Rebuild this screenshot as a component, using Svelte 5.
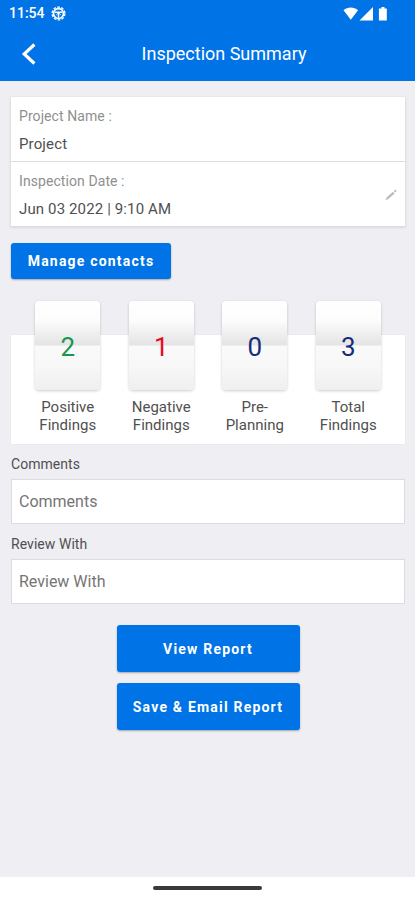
<script lang="ts">
    const details = [
        { label: "Project Name :", value: "Project", editable: false },
        { label: "Inspection Date :", value: "Jun 03 2022 | 9:10 AM", editable: true },
    ];

    const findings = [
        { count: 2, lines: ["Positive", "Findings"], tone: "positive" },
        { count: 1, lines: ["Negative", "Findings"], tone: "negative" },
        { count: 0, lines: ["Pre-", "Planning"], tone: "neutral" },
        { count: 3, lines: ["Total", "Findings"], tone: "neutral" },
    ];

    let comments = $state("");
    let reviewWith = $state("");
</script>

<div class="screen">
    <header>
        <div class="status-bar">
            <span class="time">11:54</span>
            <svg class="gear" viewBox="0 0 16 16">
                <circle cx="8" cy="8" r="6.8" fill="none" stroke="#fff" stroke-width="1.4" stroke-dasharray="2.8 1.47" />
                <circle cx="8" cy="8" r="5.3" fill="none" stroke="#fff" stroke-width="1.8" />
                <path d="M4 6.6h8M8 7v5.500" fill="none" stroke="#fff" stroke-width="1.5" />
                <path d="M5.600 9.500L8 7.200l2.400 2.300" fill="none" stroke="#fff" stroke-width="1" />
            </svg>
            <svg class="signals" viewBox="0 0 46 14">
                <path d="M0.5 3.2C4.4-.5 11.1-.5 15 3.2L7.8 12.7z" fill="#fff" />
                <path d="M30 0v13.5H16.5z" fill="#fff" />
                <path d="M38.500 0h3v1.400h2.300v12.100h-7.900V1.400h2.600z" fill="#fff" />
            </svg>
        </div>
        <div class="title-bar">
            <button class="back" aria-label="Back">
                <svg viewBox="0 0 16 22">
                    <path d="M13.4 1.5L3.2 11l10.2 9.5" fill="none" stroke="#fff" stroke-width="3.2" />
                </svg>
            </button>
            <h1>Inspection Summary</h1>
        </div>
    </header>

    <main>
        <section class="details">
            {#each details as item}
                <div class="detail-row">
                    <div>
                        <div class="detail-label">{item.label}</div>
                        <div class="detail-value">{item.value}</div>
                    </div>
                    {#if item.editable}
                        <svg class="pencil" viewBox="0 0 12 12">
                            <path d="M0.5 11.2l1-2.6L8 2.7l1.7 1.7-6.4 5.7zM8.7 2.1L10.4.6l1.3 1.3-1.4 1.7z" fill="#bdbdbd" />
                        </svg>
                    {/if}
                </div>
            {/each}
        </section>

        <button class="btn btn-contacts">Manage contacts</button>

        <section class="findings">
            {#each findings as item}
                <div class="finding">
                    <div class="tile {item.tone}">{item.count}</div>
                    <div class="finding-label">
                        {item.lines[0]}<br />{item.lines[1]}
                    </div>
                </div>
            {/each}
        </section>

        <label for="comments">Comments</label>
        <input id="comments" placeholder="Comments" bind:value={comments} />

        <label for="review">Review With</label>
        <input id="review" class="review-input" placeholder="Review With" bind:value={reviewWith} />

        <div class="actions">
            <button class="btn">View Report</button>
            <button class="btn">Save &amp; Email Report</button>
        </div>
    </main>

    <footer><div class="home-bar"></div></footer>
</div>

<style>
    :global(body) {
        margin: 0;
    }

    .screen {
        width: 415px;
        height: 900px;
        display: flex;
        flex-direction: column;
        overflow: hidden;
        background: #eeeef3;
        font-family: Roboto, sans-serif;
        color: #505050;
    }

    .screen * {
        box-sizing: border-box;
    }

    header {
        height: 81px;
        flex: none;
        background: #0073e6;
        color: #fff;
    }

    .status-bar {
        height: 27px;
        display: flex;
        align-items: center;
        padding: 0 26px 0 9px;
    }

    .time {
        font-size: 14px;
        font-weight: 500;
        line-height: 27px;
    }

    .gear {
        width: 15px;
        height: 15px;
        margin-left: 6px;
    }

    .signals {
        width: 46px;
        height: 14px;
        margin-left: auto;
    }

    .title-bar {
        height: 54px;
        display: grid;
        grid-template-columns: 66px 1fr 33px;
        align-items: center;
    }

    .back {
        padding: 0 0 0 21px;
        border: none;
        background: none;
        display: flex;
        cursor: pointer;
    }

    .back svg {
        width: 16px;
        height: 22px;
    }

    h1 {
        margin: 0;
        font-size: 18px;
        font-weight: 400;
        line-height: 54px;
        text-align: center;
    }

    main {
        flex: 1;
        display: flex;
        flex-direction: column;
        padding: 16px 10px 0 11px;
    }

    .details {
        flex: none;
        background: #fff;
        box-shadow: 0 1px 2px 1px rgba(0, 0, 0, 0.08);
    }

    .detail-row {
        height: 65px;
        display: flex;
        justify-content: space-between;
        align-items: center;
        padding: 1px 8px 0;
    }

    .detail-row:first-child {
        border-bottom: 1px solid #ddd;
    }

    .detail-row:last-child {
        height: 64px;
    }

    .detail-label {
        font-size: 14px;
        line-height: 20px;
        color: #8f8f8f;
        margin-bottom: 8px;
        letter-spacing: 0.08px;
    }

    .detail-value {
        font-size: 15px;
        line-height: 20px;
        letter-spacing: 0.13px;
    }

    .pencil {
        width: 12px;
        height: 12px;
    }

    .btn {
        border: none;
        border-radius: 3px;
        background: #0073e6;
        color: #fff;
        font-family: inherit;
        font-size: 14px;
        font-weight: 700;
        letter-spacing: 1.2px;
        padding: 0;
        box-shadow: 0 1px 2px rgba(0, 0, 0, 0.3);
        cursor: pointer;
    }

    .btn-contacts {
        flex: none;
        width: 160px;
        height: 36px;
        margin-top: 17px;
    }

    .findings {
        flex: none;
        height: 109px;
        margin-top: 56px;
        padding: 0 10px;
        display: grid;
        grid-template-columns: repeat(4, 1fr);
        justify-items: center;
        background: #fff;
        box-shadow: 0 0 1px rgba(0, 0, 0, 0.1);
    }

    .finding {
        margin-top: -34px;
        text-align: center;
    }

    .tile {
        width: 65px;
        height: 89px;
        margin: 0 auto;
        border-radius: 4px;
        background: linear-gradient(#fff 0%, #fcfcfc 22%, #e4e4e4 49%, #fafafa 51%, #f7f7f7 75%, #efefef 100%);
        box-shadow: 0 1px 3px rgba(0, 0, 0, 0.2);
        font-size: 26px;
        line-height: 92px;
    }

    .positive {
        color: #179553;
    }

    .negative {
        color: #e60b20;
    }

    .neutral {
        color: #172b7c;
    }

    .finding-label {
        margin-top: 8px;
        font-size: 15px;
        line-height: 18px;
    }

    label {
        margin-top: 10px;
        font-size: 14px;
        line-height: 20px;
        letter-spacing: 0.05px;
    }

    input {
        height: 45px;
        margin: 5px 0 0;
        padding: 0 7px;
        border: 1px solid #dcdce0;
        border-radius: 0;
        background: #fff;
        color: #505050;
        font-family: inherit;
        font-size: 16px;
        outline: none;
    }

    input::placeholder {
        color: #757575;
        opacity: 1;
    }

    .actions {
        width: 183px;
        margin: 21px auto 0;
        display: grid;
        gap: 11px;
    }

    .actions .btn {
        height: 47px;
    }

    footer {
        height: 23px;
        flex: none;
        background: #fff;
    }

    .home-bar {
        width: 109px;
        height: 4px;
        margin: 9px auto 0;
        border-radius: 2px;
        background: #3a3a3a;
    }
</style>
